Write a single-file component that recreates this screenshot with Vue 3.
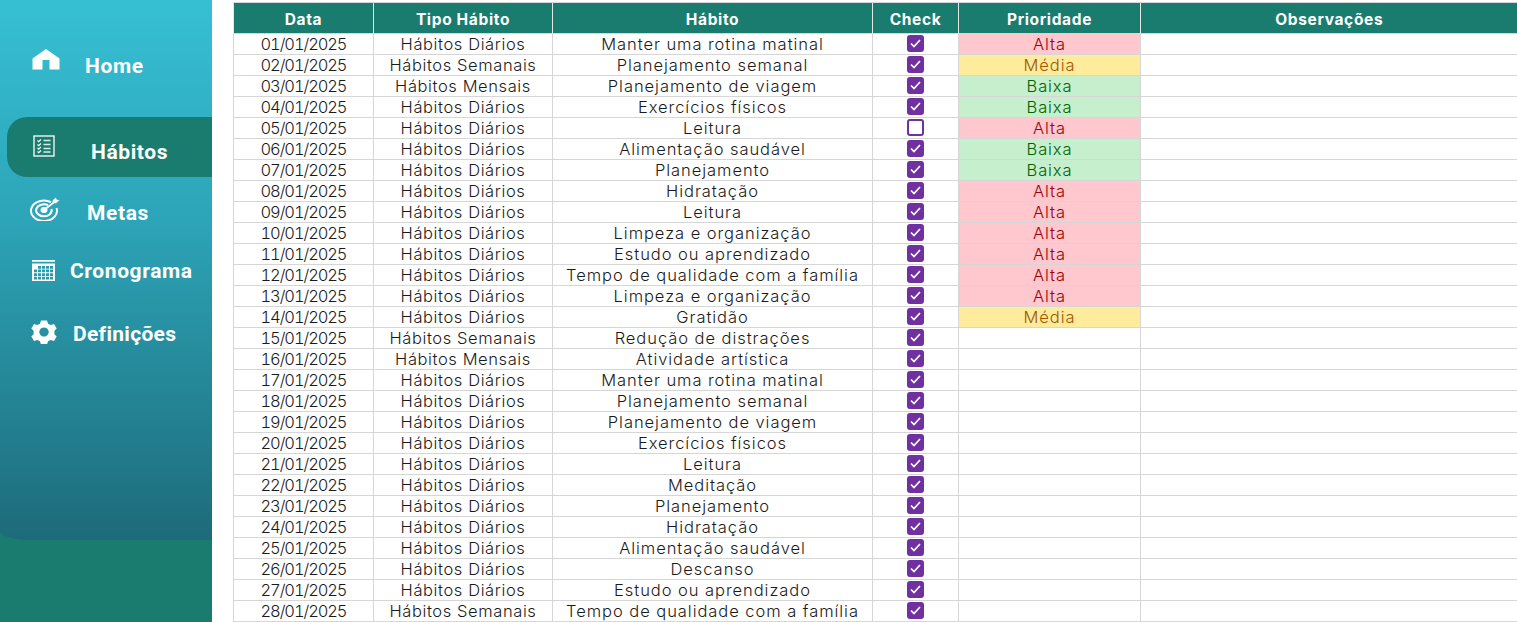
<script setup>
const D = 'Hábitos Diários', S = 'Hábitos Semanais', M = 'Hábitos Mensais'
const source = [
  [D, 'Manter uma rotina matinal', 'Alta'],
  [S, 'Planejamento semanal', 'Média'],
  [M, 'Planejamento de viagem', 'Baixa'],
  [D, 'Exercícios físicos', 'Baixa'],
  [D, 'Leitura', 'Alta'],
  [D, 'Alimentação saudável', 'Baixa'],
  [D, 'Planejamento', 'Baixa'],
  [D, 'Hidratação', 'Alta'],
  [D, 'Leitura', 'Alta'],
  [D, 'Limpeza e organização', 'Alta'],
  [D, 'Estudo ou aprendizado', 'Alta'],
  [D, 'Tempo de qualidade com a família', 'Alta'],
  [D, 'Limpeza e organização', 'Alta'],
  [D, 'Gratidão', 'Média'],
  [S, 'Redução de distrações', ''],
  [M, 'Atividade artística', ''],
  [D, 'Manter uma rotina matinal', ''],
  [D, 'Planejamento semanal', ''],
  [D, 'Planejamento de viagem', ''],
  [D, 'Exercícios físicos', ''],
  [D, 'Leitura', ''],
  [D, 'Meditação', ''],
  [D, 'Planejamento', ''],
  [D, 'Hidratação', ''],
  [D, 'Alimentação saudável', ''],
  [D, 'Descanso', ''],
  [D, 'Estudo ou aprendizado', ''],
  [S, 'Tempo de qualidade com a família', '']
]
const rows = source.map((r, i) => ({
  date: String(i + 1).padStart(2, '0') + '/01/2025',
  type: r[0],
  habit: r[1],
  checked: i !== 4,
  prio: r[2]
}))
const prioClass = { Alta: 'alta', 'Média': 'media', Baixa: 'baixa' }
let cells = ''
for (let row = 0; row < 4; row++) {
  for (let col = 0; col < 5; col++) {
    if (row === 0 && col === 0) continue
    const x = 2 + col * 4
    const y = 6 + row * 3.6
    cells += `M${x} ${y}h3v2.700h-3Z`
  }
}
const calendar = 'M0 0H23V1.800H0ZM0 3.500H23V21H0Z' + cells
</script>

<template>
  <div class="page">
    <aside class="side">
      <nav class="menu">
        <a class="item home">
          <svg class="ico" width="28" height="21" viewBox="0 0 28 21"><path fill="#fff" d="M14 0 L27.500 9.500 V20.500 H17.500 V11 H10.500 V20.500 H0.500 V9.500 Z"/></svg>
          <span>Home</span>
        </a>
        <a class="item habits">
          <svg class="ico" width="22" height="22" viewBox="0 0 22 22" fill="none" stroke="#fff"><rect x="1" y="1" width="20" height="20" stroke-width="1.300"/><path stroke-width="1.100" d="M4.500 5.500l1.200 1.200L8 4.500M4.500 9.500l1.200 1.200L8 8.500M4.500 13l1.200 1.200L8 12M4.500 16.500l1.200 1.200L8 15.500"/><path stroke-width="1.300" opacity=".85" d="M10.500 5.500h7M10.500 9.500h7M10.500 13.500h7M10.500 17h7"/></svg>
          <span class="lbl-habits">Hábitos</span>
        </a>
        <a class="item metas">
          <svg class="ico" width="30" height="24" viewBox="0 0 30 24" fill="none" stroke="#fff"><path stroke-width="2" d="M21 5.200A13 10.200 0 1 0 26.500 11"/><path stroke-width="2" d="M18 8.200A7.800 6 0 1 0 21.500 12"/><ellipse cx="14" cy="13" rx="3.500" ry="3" fill="#fff" stroke="none"/><path stroke-width="1.600" d="M14 13L25 4.500"/><path fill="#fff" stroke="none" d="M22.500 3.500l3.500-3 .6 2.300 2.900.3-3.500 3.200-3-.4z"/></svg>
          <span>Metas</span>
        </a>
        <a class="item crono">
          <svg class="ico" width="23" height="21" viewBox="0 0 23 21"><path fill="#fff" fill-rule="evenodd" :d="calendar"/></svg>
          <span>Cronograma</span>
        </a>
        <a class="item defs">
          <svg class="ico" width="28" height="24" viewBox="0 0 28 24"><path fill="#fff" fill-rule="evenodd" d="M11 0.500h6l1 3.200 2.700 1.300 3.300-1 2.700 4.500-2.300 2.300v3.400l2.300 2.300-2.700 4.500-3.300-1-2.700 1.300-1 3.200h-6l-1-3.200-2.700-1.300-3.300 1-2.700-4.500 2.300-2.300v-3.400L1.300 8.500 4 4l3.300 1L10 3.700ZM14 7.500a4.700 4.500 0 1 0 0.010 0Z"/></svg>
          <span>Definições</span>
        </a>
      </nav>
    </aside>
    <main class="content">
      <table class="grid">
        <colgroup>
          <col class="c1" /><col class="c2" /><col class="c3" /><col class="c4" /><col class="c5" /><col class="c6" />
        </colgroup>
        <thead>
          <tr>
            <th>Data</th><th>Tipo Hábito</th><th>Hábito</th><th>Check</th><th>Prioridade</th><th>Observações</th>
          </tr>
        </thead>
        <tbody>
          <tr v-for="r in rows" :key="r.date">
            <td class="date">{{ r.date }}</td>
            <td class="type">{{ r.type }}</td>
            <td class="habit">{{ r.habit }}</td>
            <td>
              <span class="box" :class="{ on: r.checked }">
                <svg v-if="r.checked" width="11" height="9" viewBox="0 0 11 9" fill="none" stroke="#fff" stroke-width="1.700"><path d="M1 4.500l3 3L10 1"/></svg>
              </span>
            </td>
            <td :class="prioClass[r.prio]">{{ r.prio }}</td>
            <td></td>
          </tr>
        </tbody>
      </table>
    </main>
  </div>
</template>

<style scoped>
.page {
  display: flex;
  width: 1517px;
  height: 622px;
  overflow: hidden;
  background: #fff;
}
.side {
  flex: 0 0 212px;
  height: 622px;
  background: #1a7c6e;
}
.menu {
  height: 540px;
  box-sizing: border-box;
  padding-top: 40px;
  display: flex;
  flex-direction: column;
  border-bottom-left-radius: 28px 9px;
  background: linear-gradient(180deg, #36bfd4 0%, #2da5b8 40%, #1d6b7a 100%);
}
.item {
  display: flex;
  align-items: center;
  color: #fff;
  font-family: Roboto, "Liberation Sans", sans-serif;
  font-weight: 700;
  font-size: 21px;
  letter-spacing: 0.6px;
  margin-left: 7px;
}
.ico { flex: none; }
.home { height: 50px; padding-left: 25px; gap: 25px; }
.home span { margin-top: 2px; }
.home .ico { margin-top: -12px; }
.habits {
  height: 60px;
  margin-top: 27px;
  padding-left: 26px;
  gap: 36px;
  background: #1a7c6e;
  border-radius: 20px 0 0 20px;
}
.habits .ico { margin-top: -3px; }
.lbl-habits { margin-top: 9px; }
.metas { height: 40px; margin-top: 15px; padding-left: 23px; gap: 27px; }
.metas .ico { margin-top: -6px; }
.metas span { margin-top: 2px; }
.crono { height: 40px; margin-top: 19px; padding-left: 25px; gap: 15px; }
.crono .ico { margin-top: -2px; }
.defs { height: 40px; margin-top: 23px; padding-left: 23px; gap: 15px; letter-spacing: 0.3px; }
.defs .ico { margin-top: -4px; }
.content {
  flex: 1;
  padding: 2px 0 0 21px;
  min-width: 0;
}
.grid {
  table-layout: fixed;
  border-collapse: collapse;
  width: 1284px;
  font-family: Inter, "Liberation Sans", sans-serif;
}
.c1 { width: 140px; }
.c2 { width: 179px; }
.c3 { width: 320px; }
.c4 { width: 86px; }
.c5 { width: 182px; }
.c6 { width: 377px; }
th {
  height: 31px;
  padding: 2px 0 0;
  box-sizing: border-box;
  background: #1a7c6e;
  color: #fff;
  font-size: 15.500px;
  font-weight: 700;
  letter-spacing: 0.650px;
  text-align: center;
  border-top: 1px solid #d6d6d6;
  border-left: 1px solid #e3e7e6;
}
td {
  height: 21px;
  padding: 0;
  box-sizing: border-box;
  border: 1px solid #d6d6d6;
  color: #1a1a1a;
  font-size: 16.500px;
  font-weight: 300;
  letter-spacing: 0.900px;
  line-height: 20px;
  text-align: center;
  white-space: nowrap;
  overflow: hidden;
}
td.date { letter-spacing: -1.100px; font-variant-numeric: tabular-nums; }
td.type { letter-spacing: 0.600px; }
td.habit { letter-spacing: 0.950px; }
.alta { background: #ffc7ce; color: #9c0006; }
.media { background: #ffeb9c; color: #9c5700; }
.baixa { background: #c6efce; color: #006100; }
.box {
  display: inline-flex;
  align-items: center;
  justify-content: center;
  vertical-align: middle;
  width: 17px;
  height: 17px;
  box-sizing: border-box;
  border-radius: 3px;
  border: 2px solid #7030a0;
  background: #fff;
  margin-top: -4px;
}
.box.on { background: #7030a0; }
</style>
